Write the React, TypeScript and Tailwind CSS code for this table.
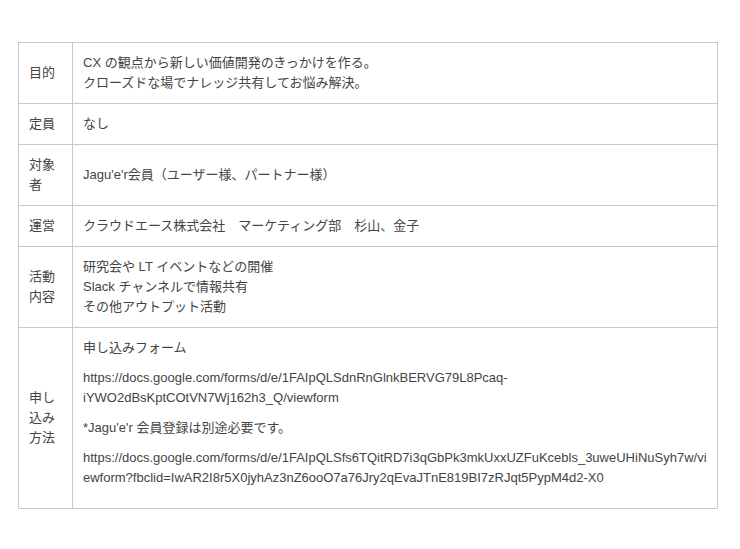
const rows: { label: string; body: React.ReactNode }[] = [
  {
    label: '目的',
    body: (
      <>
        CX の観点から新しい価値開発のきっかけを作る。
        <br />
        クローズドな場でナレッジ共有してお悩み解決。
      </>
    ),
  },
  { label: '定員', body: 'なし' },
  { label: '対象者', body: "Jagu'e'r会員（ユーザー様、パートナー様）" },
  { label: '運営', body: 'クラウドエース株式会社　マーケティング部　杉山、金子' },
  {
    label: '活動内容',
    body: (
      <>
        研究会や LT イベントなどの開催
        <br />
        Slack チャンネルで情報共有
        <br />
        その他アウトプット活動
      </>
    ),
  },
  {
    label: '申し込み方法',
    body: (
      <>
        <p className="mb-[10px]">申し込みフォーム</p>
        <p className="mb-[10px]">
          https://docs.google.com/forms/d/e/1FAIpQLSdnRnGlnkBERVG79L8Pcaq-iYWO2dBsKptCOtVN7Wj162h3_Q/viewform
        </p>
        <p className="mb-[10px]">*Jagu'e'r 会員登録は別途必要です。</p>
        <p className="mb-[10px]">
          https://docs.google.com/forms/d/e/1FAIpQLSfs6TQitRD7i3qGbPk3mkUxxUZFuKcebls_3uweUHiNuSyh7w/viewform?fbclid=IwAR2I8r5X0jyhAz3nZ6ooO7a76Jry2qEvaJTnE819BI7zRJqt5PypM4d2-X0
        </p>
      </>
    ),
  },
];

export default function App() {
  return (
    <div className="min-h-screen bg-white pt-[42px] pl-[18px] text-[13px] leading-[20px] text-[#444] font-['Liberation_Sans','Noto_Sans_CJK_JP',sans-serif]">
      <table className="w-[700px] table-fixed border-collapse">
        <colgroup>
          <col className="w-[54px]" />
          <col />
        </colgroup>
        <tbody>
          {rows.map((r) => (
            <tr key={r.label}>
              <td className="border border-[#c8c8c8] p-[10px] align-middle break-all">{r.label}</td>
              <td className="border border-[#c8c8c8] p-[10px] align-middle break-words">{r.body}</td>
            </tr>
          ))}
        </tbody>
      </table>
    </div>
  );
}
